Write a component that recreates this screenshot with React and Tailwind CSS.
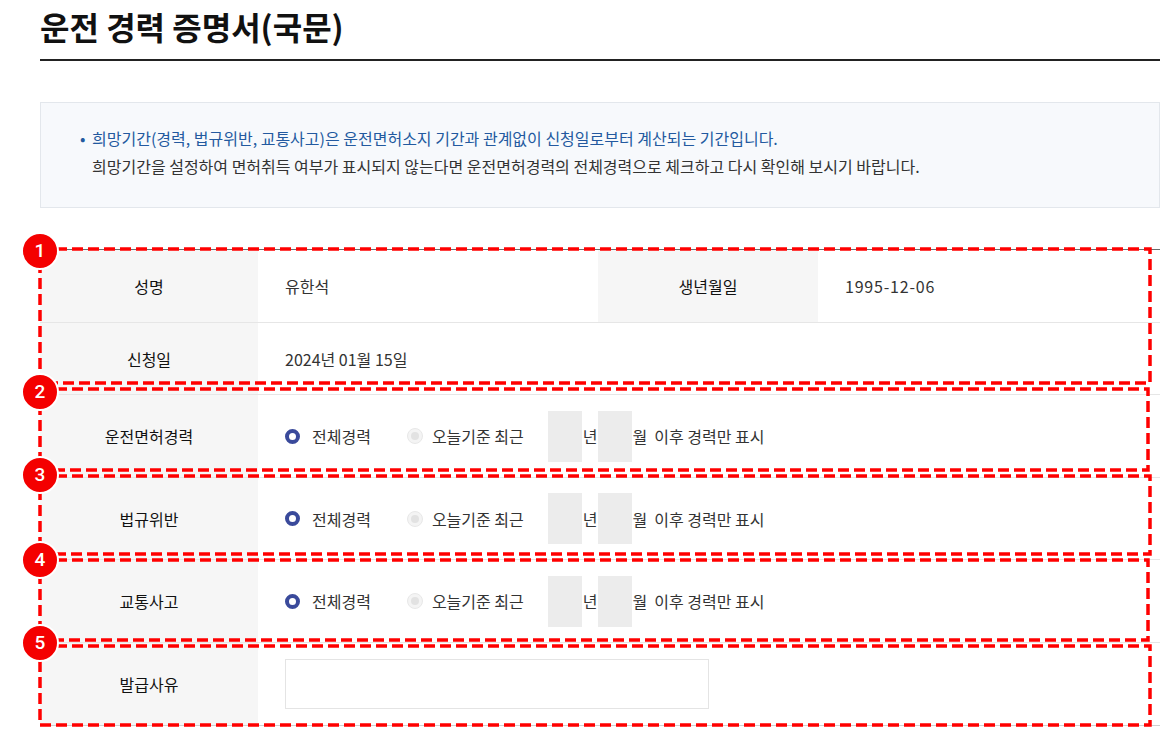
import React from "react";

const font = { fontFamily: '"Noto Sans CJK KR", "Noto Sans", sans-serif' };

function RadioOn() {
  return <span className="inline-block w-[15px] h-[15px] rounded-full border-[4px] border-[#3a4a9b] bg-white shrink-0" />;
}
function RadioOff() {
  return (
    <span className="inline-flex w-[16px] h-[16px] rounded-full bg-[#f4f4f4] border border-[#e8e8e8] items-center justify-center shrink-0">
      <span className="w-[8px] h-[8px] rounded-full bg-[#e2e2e2]" />
    </span>
  );
}

function PeriodRow({ label, h }) {
  return (
    <div className={`grid grid-cols-[218px_1fr] border-b border-[#e6e6e6] ${h}`}>
      <div className="bg-[#f6f6f6] flex items-center justify-center text-[#111]">{label}</div>
      <div className="flex items-center pl-[27px] text-[#333]">
        <RadioOn />
        <span className="ml-[12px]">전체경력</span>
        <span className="ml-[36px] flex"><RadioOff /></span>
        <span className="ml-[9px]">오늘기준 최근</span>
        <span className="ml-[24px] w-[34px] h-[51px] bg-[#ececec]" />
        <span className="ml-[1px]">년</span>
        <span className="w-[34px] h-[51px] bg-[#ececec]" />
        <span className="ml-[1px]">월</span>
        <span className="ml-[7px]">이후 경력만 표시</span>
      </div>
    </div>
  );
}

const boxes = [
  { x: 40, y: 249, w: 1110, h: 134, n: 1, cy: 251 },
  { x: 40, y: 389, w: 1108, h: 81, n: 2, cy: 392 },
  { x: 40, y: 476, w: 1110, h: 78, n: 3, cy: 475 },
  { x: 40, y: 560, w: 1108, h: 80, n: 4, cy: 560 },
  { x: 40, y: 646, w: 1110, h: 79, n: 5, cy: 643 },
];

export default function App() {
  return (
    <div className="relative w-[1162px] h-[730px] overflow-hidden bg-white text-[16px]" style={font}>
      <div className="ml-[40px] w-[1120px]">
        <div className="pt-[6px] pb-[13px] border-b-2 border-[#222]">
          <h1 className="text-[32px] leading-[40px] font-bold text-[#111]">운전 경력 증명서(국문)</h1>
        </div>
        <div className="mt-[41px] border border-[#e3e7ec] bg-[#f7f9fc] pt-[21px] pb-[27px] pl-[51px] leading-[28px]">
          <p className="text-[#23599f] relative">
            <span className="absolute left-[-12px]">•</span>
            희망기간(경력, 법규위반, 교통사고)은 운전면허소지 기간과 관계없이 신청일로부터 계산되는 기간입니다.
          </p>
          <p className="text-[#333]">희망기간을 설정하여 면허취득 여부가 표시되지 않는다면 운전면허경력의 전체경력으로 체크하고 다시 확인해 보시기 바랍니다.</p>
        </div>
        <div className="mt-[41px] border-t border-[#6b6b6b]">
          <div className="grid grid-cols-[218px_340px_220px_1fr] h-[73px] border-b border-[#e6e6e6]">
            <div className="bg-[#f6f6f6] flex items-center justify-center text-[#111]">성명</div>
            <div className="flex items-center pl-[27px] text-[#333]">유한석</div>
            <div className="bg-[#f6f6f6] flex items-center justify-center text-[#111]">생년월일</div>
            <div className="flex items-center pl-[27px] text-[#333] tracking-[0.8px]">1995-12-06</div>
          </div>
          <div className="grid grid-cols-[218px_1fr] h-[72px] border-b border-[#e6e6e6]">
            <div className="bg-[#f6f6f6] flex items-center justify-center text-[#111]">신청일</div>
            <div className="flex items-center pl-[27px] text-[#333]">2024년 01월 15일</div>
          </div>
          <PeriodRow label="운전면허경력" h="h-[83px]" />
          <PeriodRow label="법규위반" h="h-[82px]" />
          <PeriodRow label="교통사고" h="h-[83px]" />
          <div className="grid grid-cols-[218px_1fr] h-[83px] border-b border-[#cfcfcf]">
            <div className="bg-[#f6f6f6] flex items-center justify-center text-[#111]">발급사유</div>
            <div className="flex items-center pl-[27px]">
              <div className="w-[424px] h-[50px] border border-[#e4e4e4] bg-white" />
            </div>
          </div>
        </div>
      </div>

      <svg className="absolute left-0 top-0 pointer-events-none" width="1162" height="730">
        {boxes.map((b) => (
          <rect key={b.n} x={b.x} y={b.y} width={b.w} height={b.h} fill="none" stroke="#ff0000" strokeWidth="3.5" strokeDasharray="11 5" />
        ))}
      </svg>
      {boxes.map((b) => (
        <div
          key={b.n}
          className="absolute w-[38px] h-[38px] rounded-full bg-[#f40000] border-2 border-white flex items-center justify-center text-white text-[19px] font-medium"
          style={{ left: b.x - 19, top: b.cy - 19, fontFamily: 'Roboto, "Noto Sans", sans-serif' }}
        >
          {b.n}
        </div>
      ))}
    </div>
  );
}
